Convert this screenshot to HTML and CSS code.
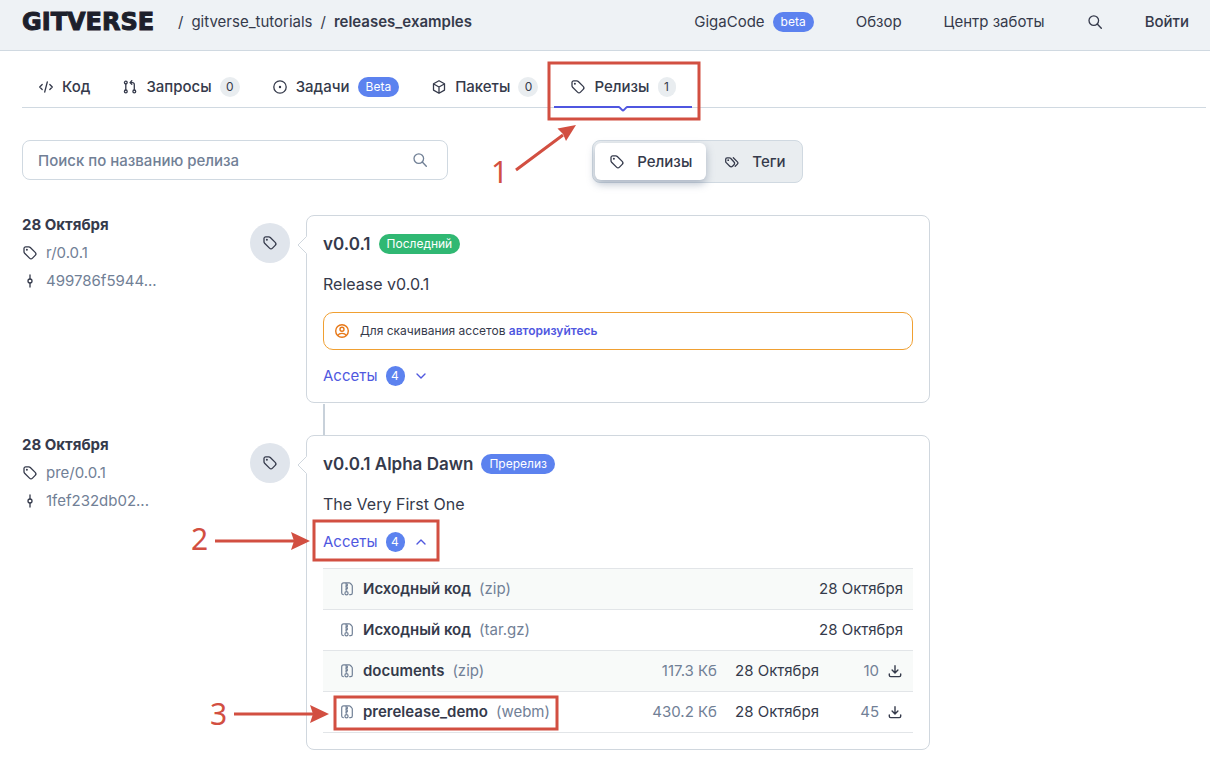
FILE: index.html
```html
<!DOCTYPE html>
<html lang="ru">
<head>
<meta charset="utf-8">
<meta name="viewport" content="width=device-width, initial-scale=1">
<title>releases_examples</title>
<link rel="stylesheet" href="styles.css">
</head>
<body>
<svg class="sprite" aria-hidden="true">
  <symbol id="tag" viewBox="0 0 16 16"><path d="M2 3.600v3.100c0 .6.2 1.100.6 1.500l4.900 4.900c.9.9 2.100.9 3 0l2.700-2.700c.9-.9.9-2.100 0-3L8.300 2.500C7.900 2.100 7.400 1.900 6.800 1.900H3.700C2.700 1.900 2 2.600 2 3.600z" fill="none" stroke="currentColor" stroke-width="1.300"/><circle cx="4.900" cy="4.800" r="1" fill="currentColor"/></symbol>
  <symbol id="search" viewBox="0 0 16 16"><circle cx="6.800" cy="6.600" r="4.800" fill="none" stroke="currentColor" stroke-width="1.300"/><path d="M10.300 10.100l4 4.100" fill="none" stroke="currentColor" stroke-width="1.400" stroke-linecap="round"/></symbol>
  <symbol id="commit" viewBox="0 0 16 16"><g fill="none" stroke="currentColor" stroke-width="1.300" stroke-linecap="round"><circle cx="8" cy="8" r="2"/><path d="M8 2v4M8 10v4"/></g></symbol>
  <symbol id="zip" viewBox="0 0 16 16"><g fill="none" stroke="currentColor" stroke-width="1.200" stroke-linecap="round" stroke-linejoin="round"><path d="M4.300 13.700c-1-.1-1.600-.6-1.600-1.600V3.900c0-1.300.7-2 2-2h5.500c.5 0 1 .2 1.300.6l1.300 1.400c.4.400.5.800.5 1.300v6.900c0 1-.6 1.600-1.600 1.600h-1"/><path d="M7 2.400v.8h1.300v1.500H7v1.500h1.300v1.500H7v1.400h.7"/><circle cx="7.500" cy="12.200" r="1.600"/></g></symbol>
  <symbol id="download" viewBox="0 0 16 16"><g fill="none" stroke="currentColor" stroke-width="1.400" stroke-linecap="round" stroke-linejoin="round"><path d="M8 2.700v7M5.100 7L8 9.900 10.900 7M2.300 11v1.200c0 .9.500 1.400 1.400 1.400h8.600c.9 0 1.400-.5 1.400-1.400V11"/></g></symbol>
</svg>

<header class="header">
  <a class="logo" href="#">GITVERSE</a>
  <nav class="crumbs" aria-label="Путь">
    <span>/</span><a href="#">gitverse_tutorials</a><span>/</span><a class="strong" href="#">releases_examples</a>
  </nav>
  <nav class="menu" aria-label="Главное меню">
    <a class="with-badge" href="#">GigaCode <span class="pill blue">beta</span></a>
    <a href="#">Обзор</a>
    <a href="#">Центр заботы</a>
    <button class="plain" type="button" aria-label="Поиск"><svg class="icon"><use href="#search"/></svg></button>
    <a class="login" href="#">Войти</a>
  </nav>
</header>

<main class="page">
  <nav class="tabs" aria-label="Разделы">
    <a class="tab" href="#"><svg class="icon" viewBox="0 0 16 16"><path d="M4.200 5.500L1.700 8l2.500 2.500M11.800 5.500L14.300 8l-2.500 2.500M9.300 3l-2.600 10" fill="none" stroke="currentColor" stroke-width="1.300" stroke-linecap="round" stroke-linejoin="round"/></svg>Код</a>
    <a class="tab" href="#"><svg class="icon" viewBox="0 0 16 16"><g fill="none" stroke="currentColor" stroke-width="1.300" stroke-linecap="round" stroke-linejoin="round"><circle cx="3.800" cy="3.600" r="1.400"/><circle cx="3.800" cy="12.400" r="1.400"/><circle cx="12.300" cy="12.400" r="1.400"/><path d="M3.800 5v6M12.300 11V5.500c0-1.200-.7-1.900-1.900-1.900H8.200M9.800 1.800L8 3.600l1.800 1.800"/></g></svg>Запросы<span class="count">0</span></a>
    <a class="tab" href="#"><svg class="icon" viewBox="0 0 16 16"><circle cx="8" cy="8" r="6.200" fill="none" stroke="currentColor" stroke-width="1.300"/><circle cx="8" cy="8" r="1.200" fill="currentColor"/></svg>Задачи<span class="pill blue">Beta</span></a>
    <a class="tab" href="#"><svg class="icon" viewBox="0 0 16 16"><path d="M8 1.700l5.500 3.100v6.300L8 14.300l-5.500-3.200V4.800zM2.700 5L8 8l5.300-3M8 8v6" fill="none" stroke="currentColor" stroke-width="1.300" stroke-linejoin="round"/></svg>Пакеты<span class="count">0</span></a>
    <a class="tab active" href="#" aria-current="page"><svg class="icon"><use href="#tag"/></svg>Релизы<span class="count narrow">1</span><svg class="notch" viewBox="0 0 12 6"><path d="M1.500 0h9L6 4z" fill="#fff"/><path d="M0 1h1.500c.6 0 .9.200 1.300.6l2.200 2.300c.7.7 1.300.7 2 0l2.200-2.300c.4-.4.7-.6 1.300-.6H12" fill="none" stroke="#4f56e0" stroke-width="2"/></svg></a>
  </nav>

  <div class="toolbar">
    <label class="search"><input type="search" placeholder="Поиск по названию релиза" aria-label="Поиск по названию релиза"><svg class="icon"><use href="#search"/></svg></label>
    <div class="switch">
      <button class="option selected" type="button"><svg class="icon"><use href="#tag"/></svg>Релизы</button>
      <button class="option" type="button"><svg class="icon" viewBox="0 0 16 16"><path d="M1.700 5.200v2.200c0 .5.200.9.500 1.200l3.600 3.600c.8.800 1.900.8 2.700 0l1.500-1.500c.8-.8.800-1.900 0-2.700L6.600 4.300c-.3-.3-.7-.5-1.200-.5H3.100c-.9 0-1.400.6-1.400 1.400zM9.300 3.800l4.100 4.100c.7.700.7 1.500 0 2.200l-2.200 2.200" fill="none" stroke="currentColor" stroke-width="1.300" stroke-linecap="round"/><circle cx="4.200" cy="6.200" r=".9" fill="currentColor"/></svg>Теги</button>
    </div>
  </div>

  <section class="releases">
    <article class="release">
      <div class="meta">
        <time>28 Октября</time>
        <a href="#"><svg class="icon"><use href="#tag"/></svg>r/0.0.1</a>
        <a href="#"><svg class="icon"><use href="#commit"/></svg>499786f5944...</a>
      </div>
      <div class="marker"><svg class="icon"><use href="#tag"/></svg></div>
      <div class="card">
        <svg class="tail" viewBox="0 0 10 18"><path d="M10 0L1 9l9 9z" fill="#fff"/><path d="M9.500 .5L1 9l8.500 8.500" fill="none" stroke="#d0d7de"/></svg>
        <h2>v0.0.1 <span class="pill green">Последний</span></h2>
        <p>Release v0.0.1</p>
        <div class="alert"><svg class="icon" viewBox="0 0 16 16"><g fill="none" stroke="currentColor" stroke-width="1.400"><circle cx="8" cy="8" r="6.300"/><circle cx="8" cy="6.300" r="2"/><path d="M3.800 12.500c.8-1.500 2.300-2.100 4.200-2.100s3.400.6 4.200 2.100"/></g></svg><span>Для скачивания ассетов <a href="#">авторизуйтесь</a></span></div>
        <button class="assets" type="button" aria-expanded="false">Ассеты <span class="num">4</span><svg class="icon" viewBox="0 0 16 16"><path d="M4 6l4 4 4-4" fill="none" stroke="currentColor" stroke-width="1.400" stroke-linecap="round" stroke-linejoin="round"/></svg></button>
      </div>
    </article>

    <article class="release">
      <div class="meta">
        <time>28 Октября</time>
        <a href="#"><svg class="icon"><use href="#tag"/></svg>pre/0.0.1</a>
        <a href="#"><svg class="icon"><use href="#commit"/></svg>1fef232db02...</a>
      </div>
      <div class="marker"><svg class="icon"><use href="#tag"/></svg></div>
      <div class="card">
        <svg class="tail" viewBox="0 0 10 18"><path d="M10 0L1 9l9 9z" fill="#fff"/><path d="M9.500 .5L1 9l8.500 8.500" fill="none" stroke="#d0d7de"/></svg>
        <h2>v0.0.1 Alpha Dawn <span class="pill blue">Пререлиз</span></h2>
        <p>The Very First One</p>
        <button class="assets" type="button" aria-expanded="true">Ассеты <span class="num">4</span><svg class="icon" viewBox="0 0 16 16"><path d="M4 10l4-4 4 4" fill="none" stroke="currentColor" stroke-width="1.400" stroke-linecap="round" stroke-linejoin="round"/></svg></button>
        <table class="files">
          <tbody>
            <tr><td><a class="file" href="#"><svg class="icon"><use href="#zip"/></svg><b>Исходный код</b> <span>(zip)</span></a></td><td class="last" colspan="3">28 Октября</td></tr>
            <tr><td><a class="file" href="#"><svg class="icon"><use href="#zip"/></svg><b>Исходный код</b> <span>(tar.gz)</span></a></td><td class="last" colspan="3">28 Октября</td></tr>
            <tr><td><a class="file" href="#"><svg class="icon"><use href="#zip"/></svg><b>documents</b> <span>(zip)</span></a></td><td class="size">117.3 Кб</td><td class="date">28 Октября</td><td class="last"><span class="downloads">10 <svg class="icon"><use href="#download"/></svg></span></td></tr>
            <tr><td><a class="file" href="#"><svg class="icon"><use href="#zip"/></svg><b>prerelease_demo</b> <span>(webm)</span></a></td><td class="size">430.2 Кб</td><td class="date">28 Октября</td><td class="last"><span class="downloads">45 <svg class="icon"><use href="#download"/></svg></span></td></tr>
          </tbody>
        </table>
      </div>
    </article>
  </section>
</main>

<svg class="callouts" width="720" height="740" viewBox="0 0 720 740">
  <g fill="none" stroke="#d24f41" stroke-width="3">
    <rect x="549" y="63" width="150" height="56"/>
    <rect x="314" y="521" width="124" height="39"/>
    <rect x="335" y="697" width="222" height="32"/>
    <path d="M516 170L563 135M215 541H294M234 714H313"/>
  </g>
  <g fill="#d24f41">
    <path d="M576 125L557.500 128.500L563 134L566 141z"/>
    <path d="M310 541L291 532L294 541L291 550z"/>
    <path d="M329 714L310 705L313 714L310 723z"/>
  </g>
  <g class="callout-text">
    <text x="491" y="183">1</text>
    <text x="191" y="550">2</text>
    <text x="210" y="725">3</text>
  </g>
</svg>
</body>
</html>
```
FILE: styles.css
```css
* { box-sizing: border-box; }
body {
  margin: 0;
  background: #fff;
  color: #353a4b;
  font: 400 15px/20px Inter, "Liberation Sans", sans-serif;
}
a { color: inherit; text-decoration: none; }
button { font: inherit; color: inherit; cursor: pointer; }
.sprite { position: absolute; width: 0; height: 0; }
.icon { display: block; width: 16px; height: 16px; flex: none; }

.header {
  display: flex;
  align-items: flex-start;
  height: 51px;
  padding: 12px 21px 0 22px;
  background: #eef2f5;
  border-bottom: 1px solid #d0d9e1;
}
.logo {
  width: 148px;
  color: #1d202b;
  font: 700 24px/20px "DejaVu Sans", sans-serif;
  -webkit-text-stroke: 1px #1d202b;
}
.crumbs { display: flex; gap: 8px; margin-left: 8px; }
.strong { font-weight: 600; }
.menu { display: flex; align-items: center; gap: 42px; margin-left: auto; }
.with-badge { display: flex; gap: 8px; }
.plain { padding: 0; border: 0; background: none; }
.login { font-weight: 500; }

.pill {
  height: 20px;
  padding: 0 8px;
  border-radius: 10px;
  color: #fff;
  font-size: 12px;
  font-weight: 400;
  line-height: 20px;
}
.blue { background: #5c82ef; }
.green { background: #30b873; }

.page { padding: 15px 4px 29px 22px; }
.tabs { display: flex; border-bottom: 1px solid #d0d9e1; }
.tab {
  position: relative;
  display: flex;
  align-items: center;
  gap: 8px;
  height: 41px;
  padding: 0 16px;
  font-weight: 500;
}
.count {
  width: 20px;
  border-radius: 10px;
  background: #e9edf0;
  font-size: 12px;
  font-weight: 400;
  text-align: center;
}
.narrow { width: 18px; }
.active::after {
  content: "";
  position: absolute;
  inset: auto 0 -1px;
  height: 2px;
  background: #4f56e0;
}
.notch { position: absolute; z-index: 1; left: 50%; bottom: -5px; width: 12px; height: 6px; margin-left: -6px; }

.toolbar { display: flex; align-items: flex-start; gap: 144px; margin-top: 32px; }
.search { position: relative; flex: 0 0 36%; color: #718096; }
.search input {
  display: block;
  width: 100%;
  height: 40px;
  padding: 0 48px 0 15px;
  border: 1px solid #d0d9e1;
  border-radius: 8px;
  background: #fff;
  font: inherit;
  font-weight: 500;
}
.search input::placeholder { color: #718096; opacity: 1; }
.search .icon { position: absolute; right: 20px; top: 12px; }
.switch {
  display: flex;
  padding: 2px;
  border: 1px solid #d0d9e1;
  border-radius: 8px;
  background: #e9edf0;
  font-weight: 500;
}
.option {
  display: flex;
  align-items: center;
  gap: 12px;
  height: 37px;
  padding: 0 14px 0 18px;
  border: 0;
  border-radius: 6px;
  background: none;
}
.selected { padding-left: 14px; background: #fff; box-shadow: 0 4px 8px rgba(80, 100, 130, .4); }

.releases { display: grid; gap: 32px; margin-top: 32px; padding-right: 276px; }
.release { position: relative; display: grid; grid-template-columns: 228px 40px minmax(0, 1fr); }
.release + .release::before {
  content: "";
  position: absolute;
  left: 301px;
  top: -31px;
  width: 2px;
  height: 31px;
  background: #c8d1da;
}
.meta { display: flex; flex-direction: column; gap: 8px; color: #718096; }
.meta time { color: #353a4b; font-weight: 700; }
.meta a { display: flex; align-items: center; gap: 8px; }
.meta .icon { color: #353a4b; }
.marker {
  display: grid;
  place-items: center;
  width: 40px;
  height: 40px;
  margin-top: 8px;
  border-radius: 50%;
  background: #e0e5ec;
}
.card {
  position: relative;
  margin-left: 16px;
  padding: 16px;
  border: 1px solid #d0d7de;
  border-radius: 8px;
  background: #fff;
}
.tail { position: absolute; left: -10px; top: 20px; width: 10px; height: 18px; }
h2 { display: flex; align-items: center; gap: 8px; margin: 0; font-size: 17px; font-weight: 600; line-height: 24px; }
p { margin: 16px 0; font-size: 16px; line-height: 24px; }
.alert {
  display: flex;
  align-items: center;
  gap: 10px;
  height: 38px;
  margin-bottom: 16px;
  padding: 0 10px;
  border: 1px solid #f0a032;
  border-radius: 10px;
  font-size: 12px;
}
.alert .icon { color: #e77817; }
.alert a { color: #5058df; font-weight: 600; }
.assets {
  display: flex;
  align-items: center;
  gap: 8px;
  padding: 0;
  border: 0;
  background: none;
  color: #5058df;
}
.num { width: 19px; border-radius: 10px; background: #5c82ef; color: #fff; font-size: 12px; }

.files { width: 100%; margin-top: 16px; border-collapse: collapse; border-top: 1px solid #e2e5e8; }
.files tr { height: 41px; border-bottom: 1px solid #e2e5e8; }
.files tr:nth-child(odd) { background: #f8faf9; }
.files td { padding: 0; text-align: right; white-space: nowrap; }
.files td:first-child { padding-left: 16px; text-align: left; }
.file { display: flex; align-items: center; gap: 8px; }
.file .icon, .file span, .files .size, .downloads { color: #718096; }
.file b { font-weight: 600; }
.files .size { padding-right: 18px; }
.files .date { width: 84px; }
.files .last { width: 94px; padding-right: 10px; }
.downloads { display: flex; align-items: center; justify-content: flex-end; gap: 8px; }
.downloads .icon { color: #353a4b; }

.callouts { position: absolute; left: 0; top: 0; pointer-events: none; }
.callout-text { fill: #d24f41; font: 400 30px "Noto Sans", sans-serif; }
```
